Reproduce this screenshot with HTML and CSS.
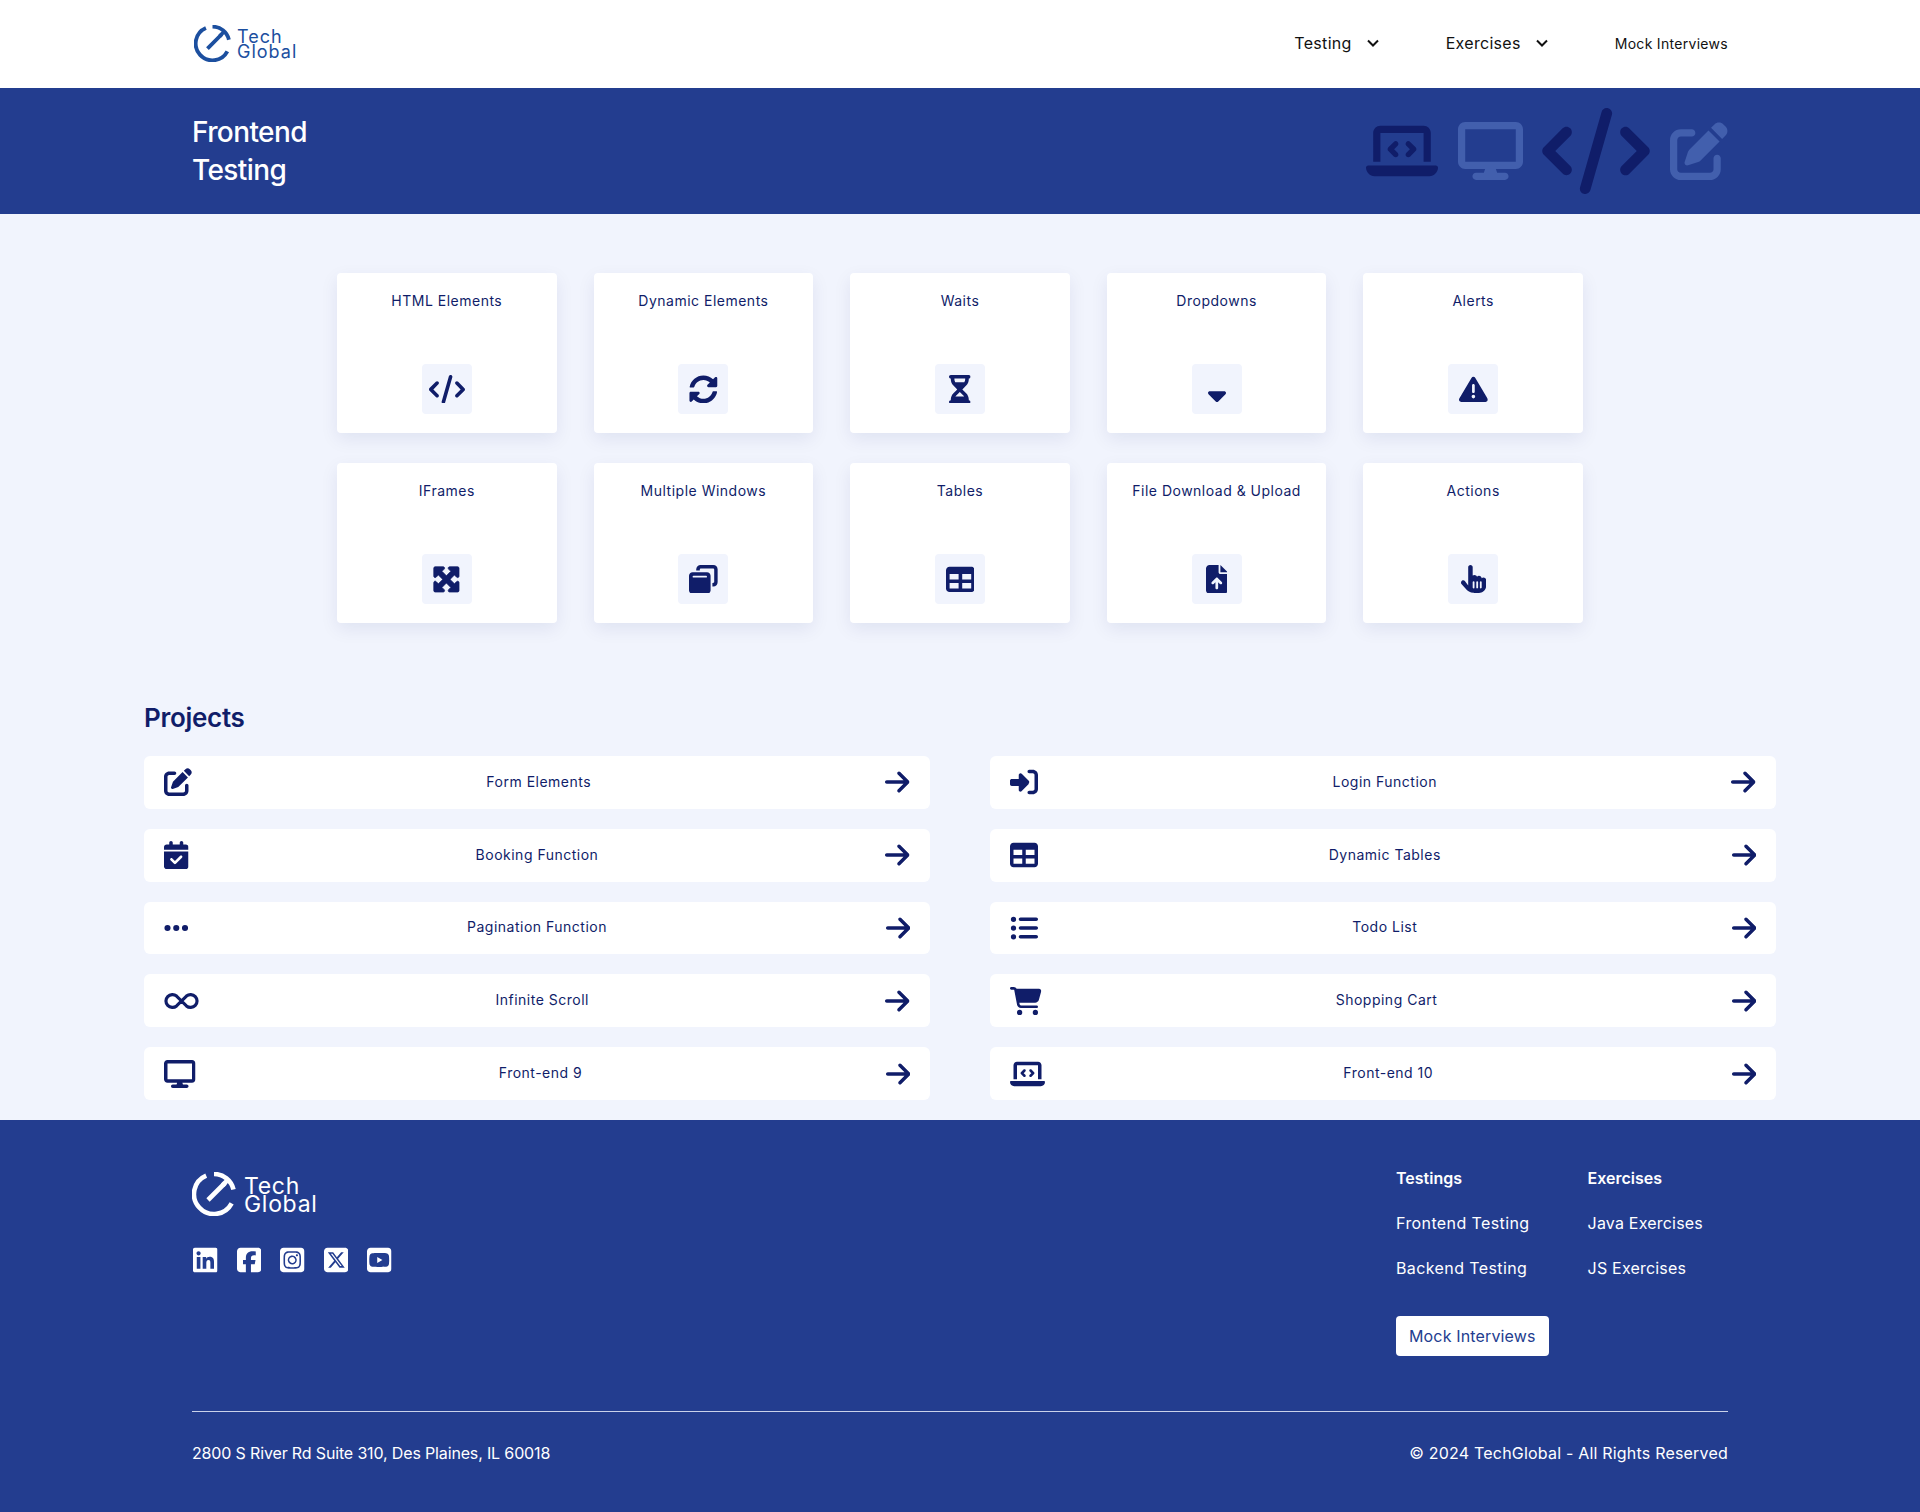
FILE: index.html
```html
<!DOCTYPE html>
<html>
	<head>
		<meta charset="UTF-8">
		<title>Frontend Testing</title>
		<link rel="stylesheet" href="styles.css">
	</head>
	<body>
		<svg class="sprites" xmlns="http://www.w3.org/2000/svg">
			<symbol id="i-code" viewBox="0 0 640 512"><path d="M392.8 1.2c-17-4.9-34.7 5-39.6 22l-128 448c-4.9 17 5 34.7 22 39.6s34.7-5 39.6-22l128-448c4.9-17-5-34.7-22-39.6zm80.6 120.1c-12.5 12.5-12.5 32.8 0 45.3L562.7 256l-89.4 89.4c-12.5 12.5-12.5 32.8 0 45.3s32.8 12.5 45.3 0l112-112c12.5-12.5 12.5-32.8 0-45.3l-112-112c-12.5-12.5-32.8-12.5-45.3 0zm-306.7 0c-12.5-12.5-32.8-12.5-45.3 0l-112 112c-12.5 12.5-12.5 32.8 0 45.3l112 112c12.5 12.5 32.8 12.5 45.3 0s12.5-32.8 0-45.3L77.3 256l89.4-89.4c12.5-12.5 12.5-32.8 0-45.3z"/></symbol>
			<symbol id="i-pen" viewBox="0 0 512 512"><path d="M471.6 21.7c-21.9-21.9-57.3-21.9-79.2 0L362.3 51.7l97.9 97.9 30.1-30.1c21.9-21.9 21.9-57.3 0-79.2L471.6 21.7zm-299.2 220c-6.1 6.1-10.8 13.6-13.5 21.9l-29.6 88.8c-2.9 8.6-.6 18.1 5.8 24.6s15.9 8.7 24.6 5.8l88.8-29.6c8.2-2.7 15.7-7.4 21.9-13.5L437.7 172.3 339.7 74.3 172.4 241.7zM96 64C43 64 0 107 0 160V416c0 53 43 96 96 96H352c53 0 96-43 96-96V320c0-17.7-14.3-32-32-32s-32 14.3-32 32v96c0 17.7-14.3 32-32 32H96c-17.7 0-32-14.3-32-32V160c0-17.7 14.3-32 32-32h96c17.7 0 32-14.3 32-32s-14.3-32-32-32H96z"/></symbol>
			<symbol id="i-desktop" viewBox="0 0 576 512"><path d="M64 0C28.7 0 0 28.7 0 64V352c0 35.3 28.7 64 64 64H240l-10.7 32H160c-17.7 0-32 14.3-32 32s14.3 32 32 32H416c17.7 0 32-14.3 32-32s-14.3-32-32-32H346.7L336 416H512c35.3 0 64-28.7 64-64V64c0-35.3-28.7-64-64-64H64zM512 64V352H64V64H512z"/></symbol>
			<symbol id="i-laptop" viewBox="0 0 640 512"><path d="M64 96c0-35.3 28.7-64 64-64H512c35.3 0 64 28.7 64 64V352H512V96H128V352H64V96zM0 403.2C0 392.6 8.6 384 19.2 384H620.8c10.6 0 19.2 8.6 19.2 19.2c0 42.4-34.4 76.8-76.8 76.8H76.8C34.4 480 0 445.6 0 403.2zM281 209l-31 31 31 31c9.4 9.4 9.4 24.6 0 33.9s-24.6 9.4-33.9 0l-48-48c-9.4-9.4-9.4-24.6 0-33.9l48-48c9.4-9.4 24.6-9.4 33.9 0s9.4 24.6 0 33.9zM393 175l48 48c9.4 9.4 9.4 24.6 0 33.9l-48 48c-9.4 9.4-24.6 9.4-33.9 0s-9.4-24.6 0-33.9l31-31-31-31c-9.4-9.4-9.4-24.6 0-33.9s24.6-9.4 33.9 0z"/></symbol>
			<symbol id="i-arrow" viewBox="0 0 448 512"><path d="M438.6 278.6c12.5-12.5 12.5-32.8 0-45.3l-160-160c-12.5-12.5-32.8-12.5-45.3 0s-12.5 32.8 0 45.3L338.8 224 32 224c-17.7 0-32 14.3-32 32s14.3 32 32 32l306.7 0L233.4 393.4c-12.5 12.5-12.5 32.8 0 45.3s32.8 12.5 45.3 0l160-160z"/></symbol>
			<symbol id="i-sync" viewBox="0 0 512 512"><path d="M370.72 133.28C339.458 104.008 298.888 87.962 255.848 88c-77.458.068-144.328 53.178-162.791 126.85-1.344 5.363-6.122 9.15-11.651 9.15H24.103c-7.498 0-13.194-6.807-11.807-14.176C33.933 94.924 134.813 8 256 8c66.448 0 126.791 26.136 171.315 68.685L463.03 40.97C478.149 25.851 504 36.559 504 57.941V192c0 13.255-10.745 24-24 24H345.941c-21.382 0-32.09-25.851-16.971-40.971l41.75-41.749zM32 296h134.059c21.382 0 32.09 25.851 16.971 40.971l-41.75 41.75c31.262 29.273 71.835 45.319 114.876 45.28 77.418-.07 144.315-53.144 162.787-126.849 1.344-5.363 6.122-9.15 11.651-9.15h57.304c7.498 0 13.194 6.807 11.807 14.176C478.067 417.076 377.187 504 256 504c-66.448 0-126.791-26.136-171.315-68.685L48.97 471.03C33.851 486.149 8 475.441 8 454.059V320c0-13.255 10.745-24 24-24z"/></symbol>
			<symbol id="i-hourglass" viewBox="0 0 384 512"><path d="M32 0C14.3 0 0 14.3 0 32S14.3 64 32 64V75c0 42.4 16.9 83.1 46.9 113.1L146.7 256 78.9 323.9C48.9 353.9 32 394.6 32 437v11c-17.7 0-32 14.3-32 32s14.3 32 32 32H64 320h32c17.7 0 32-14.3 32-32s-14.3-32-32-32V437c0-42.4-16.9-83.1-46.9-113.1L237.3 256l67.9-67.9c30-30 46.9-70.7 46.9-113.1V64c17.7 0 32-14.3 32-32s-14.3-32-32-32H320 64 32zM96 75V64H288V75c0 19-5.6 37.4-16 53H112c-10.3-15.6-16-34-16-53zm16 309c3.5-5.3 7.6-10.3 12.1-14.9L192 301.3l67.9 67.9c4.6 4.6 8.6 9.6 12.1 14.9H112z"/></symbol>
			<symbol id="i-sortdown" viewBox="0 0 320 512"><path d="M182.6 470.6c-12.5 12.5-32.8 12.5-45.3 0l-128-128c-9.2-9.2-11.9-22.9-6.9-34.9s16.6-19.8 29.6-19.8H288c12.9 0 24.6 7.8 29.6 19.8s2.2 25.7-6.9 34.9l-128 128z"/></symbol>
			<symbol id="i-warning" viewBox="0 0 512 512"><path d="M256 32c14.2 0 27.3 7.5 34.5 19.8l216 368c7.3 12.4 7.3 27.7 .2 40.1S486.3 480 472 480H40c-14.3 0-27.6-7.7-34.7-20.1s-7-27.8 .2-40.1l216-368C228.7 39.5 241.8 32 256 32zm0 128c-13.3 0-24 10.7-24 24V296c0 13.3 10.7 24 24 24s24-10.7 24-24V184c0-13.3-10.7-24-24-24zm32 224a32 32 0 1 0 -64 0 32 32 0 1 0 64 0z"/></symbol>
			<symbol id="i-expand" viewBox="0 0 512 512"><path stroke="currentColor" stroke-width="14" d="M200 32H56C42.7 32 32 42.7 32 56V200c0 9.7 5.8 18.5 14.8 22.2s19.3 1.7 26.2-5.2l40-40 79 79-79 79L73 295c-6.9-6.9-17.2-8.9-26.2-5.2S32 302.3 32 312V456c0 13.3 10.7 24 24 24H200c9.7 0 18.5-5.8 22.2-14.8s1.7-19.3-5.2-26.2l-40-40 79-79 79 79-40 40c-6.9 6.9-8.9 17.2-5.2 26.2s12.5 14.8 22.2 14.8H456c13.3 0 24-10.7 24-24V312c0-9.7-5.8-18.5-14.8-22.2s-19.3-1.7-26.2 5.2l-40 40-79-79 79-79 40 40c6.9 6.9 17.2 8.9 26.2 5.2s14.8-12.5 14.8-22.2V56c0-13.3-10.7-24-24-24H312c-9.7 0-18.5 5.8-22.2 14.8s-1.7 19.3 5.2 26.2l40 40-79 79-79-79 40-40c6.9-6.9 8.9-17.2 5.2-26.2S209.7 32 200 32z"/></symbol>
			<symbol id="i-windows" viewBox="0 0 512 512"><path d="M432 64H208c-8.8 0-16 7.2-16 16V96H128V80c0-44.2 35.8-80 80-80H432c44.2 0 80 35.8 80 80V304c0 44.2-35.8 80-80 80H416V320h16c8.8 0 16-7.2 16-16V80c0-8.8-7.2-16-16-16zM0 192c0-35.3 28.7-64 64-64H320c35.3 0 64 28.7 64 64V448c0 35.3-28.7 64-64 64H64c-35.3 0-64-28.7-64-64V192zm80 0c-8.8 0-16 7.2-16 16s7.2 16 16 16H304c8.8 0 16-7.2 16-16s-7.2-16-16-16H80z"/></symbol>
			<symbol id="i-table" viewBox="0 0 512 512"><path d="M64 256V160H224v96H64zm0 64H224v96H64V320zm224 96V320H448v96H288zM448 256H288V160H448v96zM64 32C28.7 32 0 60.7 0 96V416c0 35.3 28.7 64 64 64H448c35.3 0 64-28.7 64-64V96c0-35.3-28.7-64-64-64H64z"/></symbol>
			<symbol id="i-file" viewBox="0 0 384 512"><path d="M64 0C28.7 0 0 28.7 0 64V448c0 35.3 28.7 64 64 64H320c35.3 0 64-28.7 64-64V160H256c-17.7 0-32-14.3-32-32V0H64zM384 128L256 0V128H384zM216 408c0 13.3-10.7 24-24 24s-24-10.7-24-24V305.9l-31 31c-9.4 9.4-24.6 9.4-33.9 0s-9.4-24.6 0-33.9l72-72c9.4-9.4 24.6-9.4 33.9 0l72 72c9.4 9.4 9.4 24.6 0 33.9s-24.6 9.4-33.9 0l-31-31V408z"/></symbol>
			<symbol id="i-hand" viewBox="0 0 448 512"><path d="M128 40c0-22.1 17.9-40 40-40s40 17.9 40 40V188.2c8.5-7.6 19.7-12.2 32-12.2c20.6 0 38.2 13 45 31.2c8.8-9.3 21.2-15.2 35-15.2c25.3 0 46 19.5 47.9 44.3c8.5-7.7 19.8-12.3 32.1-12.3c26.5 0 48 21.5 48 48v32 64c0 70.7-57.3 128-128 128l-16 0H240l-.1 0h-5.2c-5 0-9.9-.3-14.7-1c-55.3-5.6-106.2-34-140-79L8 336c-13.3-17.7-9.7-42.7 8-56s42.7-9.7 56 8l56 74.7V40zM240 304c0-8.8-7.2-16-16-16s-16 7.2-16 16v96c0 8.8 7.2 16 16 16s16-7.2 16-16V304zm48-16c-8.8 0-16 7.2-16 16v96c0 8.8 7.2 16 16 16s16-7.2 16-16V304c0-8.8-7.2-16-16-16zm80 16c0-8.8-7.2-16-16-16s-16 7.2-16 16v96c0 8.8 7.2 16 16 16s16-7.2 16-16V304z"/></symbol>
			<symbol id="i-login" viewBox="0 0 512 512"><path d="M352 96l64 0c17.7 0 32 14.3 32 32l0 256c0 17.7-14.3 32-32 32l-64 0c-17.7 0-32 14.3-32 32s14.3 32 32 32l64 0c53 0 96-43 96-96l0-256c0-53-43-96-96-96l-64 0c-17.7 0-32 14.3-32 32s14.3 32 32 32zm-9.4 182.6c12.5-12.5 12.5-32.8 0-45.3l-128-128c-9.2-9.2-22.9-11.9-34.9-6.9s-19.8 16.6-19.8 29.6l0 72-128 0c-17.7 0-32 14.3-32 32l0 64c0 17.7 14.3 32 32 32l128 0 0 72c0 12.9 7.8 24.6 19.8 29.6s25.7 2.2 34.9-6.9l128-128z"/></symbol>
			<symbol id="i-calendar" viewBox="0 0 448 512"><path d="M128 0c17.7 0 32 14.3 32 32V64H288V32c0-17.7 14.3-32 32-32s32 14.3 32 32V64h48c26.5 0 48 21.5 48 48v48H0V112C0 85.5 21.5 64 48 64H96V32c0-17.7 14.3-32 32-32zM0 192H448V464c0 26.5-21.5 48-48 48H48c-26.5 0-48-21.5-48-48V192zM329 305c9.4-9.4 9.4-24.6 0-33.9s-24.6-9.4-33.9 0l-95 95-47-47c-9.4-9.4-24.6-9.4-33.9 0s-9.4 24.6 0 33.9l64 64c9.4 9.4 24.6 9.4 33.9 0L329 305z"/></symbol>
			<symbol id="i-dots" viewBox="0 0 448 512"><path d="M8 256a56 56 0 1 1 112 0A56 56 0 1 1 8 256zm160 0a56 56 0 1 1 112 0 56 56 0 1 1 -112 0zm216-56a56 56 0 1 1 0 112 56 56 0 1 1 0-112z"/></symbol>
			<symbol id="i-infinity" viewBox="0 0 640 512"><path fill="none" stroke="currentColor" stroke-width="58" d="M320 256L230 166A118 118 0 1 0 230 346L410 166A118 118 0 1 1 410 346Z"/></symbol>
			<symbol id="i-list" viewBox="0 0 512 512"><path d="M64 144a48 48 0 1 0 0-96 48 48 0 1 0 0 96zM192 64c-17.7 0-32 14.3-32 32s14.3 32 32 32H480c17.7 0 32-14.3 32-32s-14.3-32-32-32H192zm0 160c-17.7 0-32 14.3-32 32s14.3 32 32 32H480c17.7 0 32-14.3 32-32s-14.3-32-32-32H192zm0 160c-17.7 0-32 14.3-32 32s14.3 32 32 32H480c17.7 0 32-14.3 32-32s-14.3-32-32-32H192zM64 464a48 48 0 1 0 0-96 48 48 0 1 0 0 96zm48-208a48 48 0 1 0 -96 0 48 48 0 1 0 96 0z"/></symbol>
			<symbol id="i-cart" viewBox="0 0 576 512"><path d="M0 24C0 10.7 10.7 0 24 0H69.5c22 0 41.5 12.8 50.6 32h411c26.3 0 45.5 25 38.6 50.4l-41 152.3c-8.5 31.4-37 53.3-69.5 53.3H170.7l5.4 28.5c2.2 11.3 12.1 19.5 23.6 19.5H488c13.3 0 24 10.7 24 24s-10.7 24-24 24H199.7c-34.6 0-64.3-24.6-70.7-58.5L77.4 54.5c-.7-3.8-4-6.5-7.9-6.5H24C10.7 48 0 37.3 0 24zM128 464a48 48 0 1 1 96 0 48 48 0 1 1 -96 0zm336-48a48 48 0 1 1 0 96 48 48 0 1 1 0-96z"/></symbol>
			<symbol id="i-linkedin" viewBox="0 0 448 512"><path d="M416 32H31.9C14.3 32 0 46.5 0 64.3v383.4C0 465.5 14.3 480 31.9 480H416c17.6 0 32-14.5 32-32.3V64.3c0-17.8-14.4-32.3-32-32.3zM135.4 416H69V202.2h66.5V416zm-33.2-243c-21.3 0-38.5-17.3-38.5-38.5S80.9 96 102.2 96c21.2 0 38.5 17.3 38.5 38.5 0 21.3-17.2 38.5-38.5 38.5zm282.1 243h-66.4V312c0-24.8-.5-56.7-34.5-56.7-34.6 0-39.9 27-39.9 54.9V416h-66.4V202.2h63.7v29.2h.9c8.9-16.8 30.6-34.5 62.9-34.5 67.2 0 79.7 44.3 79.7 101.9V416z"/></symbol>
			<symbol id="i-facebook" viewBox="0 0 448 512"><path d="M64 32C28.7 32 0 60.7 0 96V416c0 35.3 28.7 64 64 64h98.2V334.2H109.4V256h52.8V222.3c0-87.1 39.4-127.4 125-127.4c16.2 0 44.2 3.2 55.7 6.4V172c-6-.6-16.5-1-29.6-1c-42 0-58.2 15.9-58.2 57.2V256h83.6l-14.4 78.2H255V480H384c35.3 0 64-28.7 64-64V96c0-35.3-28.7-64-64-64H64z"/></symbol>
			<symbol id="i-instagram" viewBox="0 0 448 512"><path d="M194.4 211.7a53.3 53.3 0 1 0 59.3 88.7 53.3 53.3 0 1 0 -59.3-88.7zm142.3-68.4c-5.2-5.2-11.5-9.3-18.4-12c-18.1-7.1-57.6-6.8-83.1-6.5c-4.1 0-7.9 .1-11.2 .1c-3.3 0-7.2 0-11.4-.1c-25.5-.3-64.8-.7-82.9 6.5c-6.9 2.7-13.1 6.8-18.4 12s-9.3 11.5-12 18.4c-7.1 18.1-6.7 57.7-6.5 83.2c0 4.1 .1 7.9 .1 11.1s0 7-.1 11.1c-.2 25.5-.6 65.1 6.5 83.2c2.7 6.9 6.8 13.1 12 18.4s11.5 9.3 18.4 12c18.1 7.1 57.6 6.8 83.1 6.5c4.1 0 7.9-.1 11.2-.1c3.3 0 7.2 0 11.4 .1c25.5 .3 64.8 .7 82.9-6.5c6.9-2.7 13.1-6.8 18.4-12s9.3-11.5 12-18.4c7.2-18 6.8-57.4 6.5-83c0-4.2-.1-8.1-.1-11.4s0-7.1 .1-11.4c.3-25.5 .7-64.9-6.5-83l0 0c-2.7-6.9-6.8-13.1-12-18.4zm-67.1 44.5A82 82 0 1 1 178.4 324.2a82 82 0 1 1 91.1-136.4zm29.2-1.3c-3.1-2.1-5.6-5.1-7.1-8.6s-1.8-7.3-1.1-11.1s2.6-7.1 5.2-9.8s6.1-4.5 9.8-5.2s7.6-.4 11.1 1.1s6.5 3.9 8.6 7s3.2 6.8 3.2 10.6c0 2.5-.5 5-1.4 7.3s-2.4 4.4-4.1 6.2s-3.9 3.2-6.2 4.2s-4.8 1.5-7.3 1.5l0 0c-3.8 0-7.5-1.1-10.6-3.2zM448 96c0-35.3-28.7-64-64-64H64C28.7 32 0 60.7 0 96V416c0 35.3 28.7 64 64 64H384c35.3 0 64-28.7 64-64V96zM357 389c-18.7 18.7-41.4 24.6-67 25.9c-26.4 1.5-105.6 1.5-132 0c-25.6-1.3-48.3-7.2-67-25.9s-24.6-41.4-25.8-67c-1.5-26.4-1.5-105.6 0-132c1.3-25.6 7.1-48.3 25.8-67s41.5-24.6 67-25.8c26.4-1.5 105.6-1.5 132 0c25.6 1.3 48.3 7.1 67 25.8s24.6 41.4 25.8 67c1.5 26.3 1.5 105.4 0 131.9c-1.3 25.6-7.1 48.3-25.8 67z"/></symbol>
			<symbol id="i-x" viewBox="0 0 448 512"><path d="M64 32C28.7 32 0 60.7 0 96V416c0 35.3 28.7 64 64 64H384c35.3 0 64-28.7 64-64V96c0-35.3-28.7-64-64-64H64zm297.1 84L257.3 234.6 379.4 396H283.8L209 298.1 123.3 396H75.8l111-126.9L69.7 116h98l67.7 89.5L313.6 116h47.5zM323.3 367.6L153.4 142.9H125.1L296.9 367.6h26.3z"/></symbol>
			<symbol id="i-youtube" viewBox="0 0 448 512"><path d="M282 256.2l-95.2-54.1V310.3L282 256.2zM384 32H64C28.7 32 0 60.7 0 96V416c0 35.3 28.7 64 64 64H384c35.3 0 64-28.7 64-64V96c0-35.3-28.7-64-64-64zm14.4 136.1c7.6 28.6 7.6 88.2 7.6 88.2s0 59.6-7.6 88.1c-4.2 15.8-16.5 27.7-32.2 31.9C337.9 384 224 384 224 384s-113.9 0-142.2-7.6c-15.7-4.2-28-16.1-32.2-31.9C42 315.9 42 256.3 42 256.3s0-59.7 7.6-88.2c4.2-15.8 16.5-28.2 32.2-32.4C110.1 128 224 128 224 128s113.9 0 142.2 7.7c15.7 4.2 28 16.6 32.2 32.4z"/></symbol>
			<symbol id="i-logo" viewBox="0 0 44 44"><path fill="none" stroke="currentColor" stroke-width="4.6" d="M39.66 31.39A20 20 0 1 1 14.19 3.59M22 2A20 20 0 0 1 41.49 17.5M16 28L33 11"/><path d="M29 11.5L35 5.5L37.5 9L32.5 15Z"/></symbol>
		</svg>

		<header class="topbar">
			<div class="brand brand-top">
				<svg class="brand-mark"><use href="#i-logo"/></svg>
				<span class="brand-name">Tech<br>Global</span>
			</div>
			<nav class="topnav">
				<a class="topnav-item">Testing <svg class="chev" viewBox="0 0 12 8"><path d="M1 1.5L6 6.5L11 1.5"/></svg></a>
				<a class="topnav-item">Exercises <svg class="chev" viewBox="0 0 12 8"><path d="M1 1.5L6 6.5L11 1.5"/></svg></a>
				<a class="topnav-link">Mock Interviews</a>
			</nav>
		</header>

		<section class="banner">
			<h1>Frontend<br>Testing</h1>
			<div class="banner-icons">
				<svg class="bi-laptop"><use href="#i-laptop"/></svg>
				<svg class="bi-desktop"><use href="#i-desktop"/></svg>
				<svg class="bi-code"><use href="#i-code"/></svg>
				<svg class="bi-pen"><use href="#i-pen"/></svg>
			</div>
		</section>

		<main class="content">
			<div class="cards">
				<a class="card"><span>HTML Elements</span><i class="tile"><svg class="c-640"><use href="#i-code"/></svg></i></a>
				<a class="card"><span>Dynamic Elements</span><i class="tile"><svg class="c-512"><use href="#i-sync"/></svg></i></a>
				<a class="card"><span>Waits</span><i class="tile"><svg class="c-384"><use href="#i-hourglass"/></svg></i></a>
				<a class="card"><span>Dropdowns</span><i class="tile"><svg class="c-320"><use href="#i-sortdown"/></svg></i></a>
				<a class="card"><span>Alerts</span><i class="tile"><svg class="c-512"><use href="#i-warning"/></svg></i></a>
				<a class="card"><span>IFrames</span><i class="tile"><svg class="c-512"><use href="#i-expand"/></svg></i></a>
				<a class="card"><span>Multiple Windows</span><i class="tile"><svg class="c-512"><use href="#i-windows"/></svg></i></a>
				<a class="card"><span>Tables</span><i class="tile"><svg class="c-512"><use href="#i-table"/></svg></i></a>
				<a class="card"><span>File Download &amp; Upload</span><i class="tile"><svg class="c-384"><use href="#i-file"/></svg></i></a>
				<a class="card"><span>Actions</span><i class="tile"><svg class="c-448"><use href="#i-hand"/></svg></i></a>
			</div>

			<h2 class="projects-title">Projects</h2>
			<div class="projects">
				<a class="project"><svg class="p-512"><use href="#i-pen"/></svg><span>Form Elements</span><svg class="p-448"><use href="#i-arrow"/></svg></a>
				<a class="project"><svg class="p-512"><use href="#i-login"/></svg><span>Login Function</span><svg class="p-448"><use href="#i-arrow"/></svg></a>
				<a class="project"><svg class="p-448"><use href="#i-calendar"/></svg><span>Booking Function</span><svg class="p-448"><use href="#i-arrow"/></svg></a>
				<a class="project"><svg class="p-512"><use href="#i-table"/></svg><span>Dynamic Tables</span><svg class="p-448"><use href="#i-arrow"/></svg></a>
				<a class="project"><svg class="p-448"><use href="#i-dots"/></svg><span>Pagination Function</span><svg class="p-448"><use href="#i-arrow"/></svg></a>
				<a class="project"><svg class="p-512"><use href="#i-list"/></svg><span>Todo List</span><svg class="p-448"><use href="#i-arrow"/></svg></a>
				<a class="project"><svg class="p-640"><use href="#i-infinity"/></svg><span>Infinite Scroll</span><svg class="p-448"><use href="#i-arrow"/></svg></a>
				<a class="project"><svg class="p-576"><use href="#i-cart"/></svg><span>Shopping Cart</span><svg class="p-448"><use href="#i-arrow"/></svg></a>
				<a class="project"><svg class="p-576"><use href="#i-desktop"/></svg><span>Front-end 9</span><svg class="p-448"><use href="#i-arrow"/></svg></a>
				<a class="project"><svg class="p-640"><use href="#i-laptop"/></svg><span>Front-end 10</span><svg class="p-448"><use href="#i-arrow"/></svg></a>
			</div>
		</main>

		<footer class="footer">
			<div class="footer-top">
				<div class="footer-left">
					<div class="brand brand-foot">
						<svg class="brand-mark"><use href="#i-logo"/></svg>
						<span class="brand-name">Tech<br>Global</span>
					</div>
					<div class="socials">
						<svg><use href="#i-linkedin"/></svg>
						<svg><use href="#i-facebook"/></svg>
						<svg><use href="#i-instagram"/></svg>
						<svg><use href="#i-x"/></svg>
						<svg><use href="#i-youtube"/></svg>
					</div>
				</div>
				<div class="footer-right">
					<div class="footer-cols">
						<div class="footer-col">
							<h4>Testings</h4>
							<a>Frontend Testing</a>
							<a>Backend Testing</a>
						</div>
						<div class="footer-col footer-col-tight">
							<h4>Exercises</h4>
							<a>Java Exercises</a>
							<a>JS Exercises</a>
						</div>
					</div>
					<a class="mock-btn">Mock Interviews</a>
				</div>
			</div>
			<div class="footer-bottom">
				<span class="address">2800 S River Rd Suite 310, Des Plaines, IL 60018</span>
				<span class="copyright">&copy; 2024 TechGlobal - All Rights Reserved</span>
			</div>
		</footer>
	</body>
</html>
```

FILE: styles.css
```css
* {
	box-sizing: border-box;
}

body {
	margin: 0;
	background: #f1f4fd;
	color: #101d69;
	font-family: "Inter", "Noto Sans", sans-serif;
}

svg {
	fill: currentColor;
	display: block;
}

.sprites {
	width: 0;
	height: 0;
	position: absolute;
}

/* header */
.topbar {
	height: 88px;
	background: #fff;
	padding: 0 192px 2px 194px;
	display: flex;
	align-items: center;
	justify-content: space-between;
}

.brand {
	display: flex;
	align-items: center;
	color: #1c4f9f;
}
.brand-top .brand-mark {
	width: 37px;
	height: 37px;
}
.brand-top .brand-name {
	margin-left: 6px;
	padding-top: 2px;
	font-size: 18px;
	line-height: 15px;
	letter-spacing: 1px;
}

.topnav {
	display: flex;
	align-items: center;
	color: #111;
}
.topnav-item {
	display: flex;
	align-items: center;
	font-size: 16px;
	letter-spacing: 0.3px;
	margin-right: 67px;
}
.topnav-link {
	font-size: 14px;
	letter-spacing: 0.3px;
}
.chev {
	width: 12px;
	height: 8px;
	margin-left: 15px;
	fill: none;
	stroke: #111;
	stroke-width: 2;
}

/* banner */
.banner {
	height: 126px;
	background: #233d8f;
	color: #fff;
	padding: 0 192px;
	display: flex;
	align-items: center;
	justify-content: space-between;
}
.banner h1 {
	margin: 0;
	font-size: 28px;
	font-weight: 500;
	line-height: 38px;
	letter-spacing: -0.6px;
}
.banner-icons {
	display: flex;
	align-items: center;
}
.bi-laptop {
	width: 72px;
	height: 58px;
	color: #101d69;
}
.bi-desktop {
	width: 65px;
	height: 58px;
	margin-left: 20px;
	color: #425fad;
}
.bi-code {
	width: 108px;
	height: 86px;
	margin-left: 19px;
	color: #101d69;
}
.bi-pen {
	width: 58px;
	height: 58px;
	margin-left: 20px;
	color: #425fad;
}

/* cards */
.content {
	padding: 59px 144px 20px;
}
.cards {
	width: 1246px;
	margin-left: 193px;
	display: grid;
	grid-template-columns: repeat(5, 1fr);
	gap: 30px 37px;
}
.card {
	height: 160px;
	background: #fff;
	border-radius: 4px;
	box-shadow: 0 6px 18px rgba(16, 29, 105, 0.08);
	display: flex;
	flex-direction: column;
	align-items: center;
	justify-content: space-between;
	padding: 18px 0 19px;
	font-size: 14px;
	line-height: 20px;
	letter-spacing: 0.5px;
}
.tile {
	width: 50px;
	height: 50px;
	background: #f1f4fd;
	border-radius: 4px;
	display: flex;
	align-items: center;
	justify-content: center;
}
.c-320 { width: 18px; height: 28.8px; }
.c-384 { width: 21.6px; height: 28.8px; }
.c-448 { width: 25.2px; height: 28.8px; }
.c-512 { width: 28.8px; height: 28.8px; }
.c-640 { width: 36px; height: 28.8px; }

/* projects */
.projects-title {
	margin: 77px 0 0;
	font-size: 26px;
	font-weight: 600;
	line-height: 36px;
	letter-spacing: -0.3px;
}
.projects {
	margin-top: 20px;
	display: grid;
	grid-template-columns: 786px 786px;
	justify-content: space-between;
	row-gap: 20px;
}
.project {
	height: 52.8px;
	background: #fff;
	border-radius: 6px;
	padding: 0 20px;
	display: flex;
	align-items: center;
	justify-content: space-between;
	font-size: 14px;
	letter-spacing: 0.5px;
}
.project span {
	margin-bottom: 2px;
}
.p-448 { width: 24.5px; height: 28px; }
.p-512 { width: 28px; height: 28px; }
.p-576 { width: 31.5px; height: 28px; }
.p-640 { width: 35px; height: 28px; }

/* footer */
.footer {
	height: 392px;
	background: #233d8f;
	color: #fff;
	padding: 0 192px;
}
.footer-top {
	height: 292px;
	display: flex;
	justify-content: space-between;
	border-bottom: 1px solid #c9d2ea;
}
.brand-foot {
	color: #fff;
	margin-top: 52px;
}
.brand-foot .brand-mark {
	width: 44px;
	height: 44px;
}
.brand-foot .brand-name {
	margin-left: 8px;
	padding-top: 2px;
	font-size: 23px;
	line-height: 18px;
	letter-spacing: 0.7px;
}
.socials {
	margin: 30px 0 0 1px;
	display: flex;
	gap: 19px;
}
.socials svg {
	width: 24.5px;
	height: 28px;
}
.footer-right {
	width: 332px;
	padding-top: 46px;
}
.footer-cols {
	display: flex;
	gap: 58px;
}
.footer-col {
	display: flex;
	flex-direction: column;
	gap: 21px;
	font-size: 16px;
	line-height: 24px;
	letter-spacing: 0.4px;
}
.footer-col-tight {
	letter-spacing: 0.2px;
}
.footer-col h4 {
	margin: 0;
	font-size: 16px;
	font-weight: 600;
	line-height: 24px;
	letter-spacing: 0;
}
.mock-btn {
	display: inline-block;
	margin-top: 36px;
	padding: 0 13px;
	height: 40px;
	line-height: 40px;
	font-size: 16px;
	letter-spacing: 0.15px;
	background: #fff;
	color: #233d8f;
	border-radius: 4px;
}
.footer-bottom {
	display: flex;
	justify-content: space-between;
	padding-top: 29px;
	font-size: 16px;
	line-height: 24px;
}
.address {
	letter-spacing: -0.15px;
}
.copyright {
	letter-spacing: 0.2px;
}
```
